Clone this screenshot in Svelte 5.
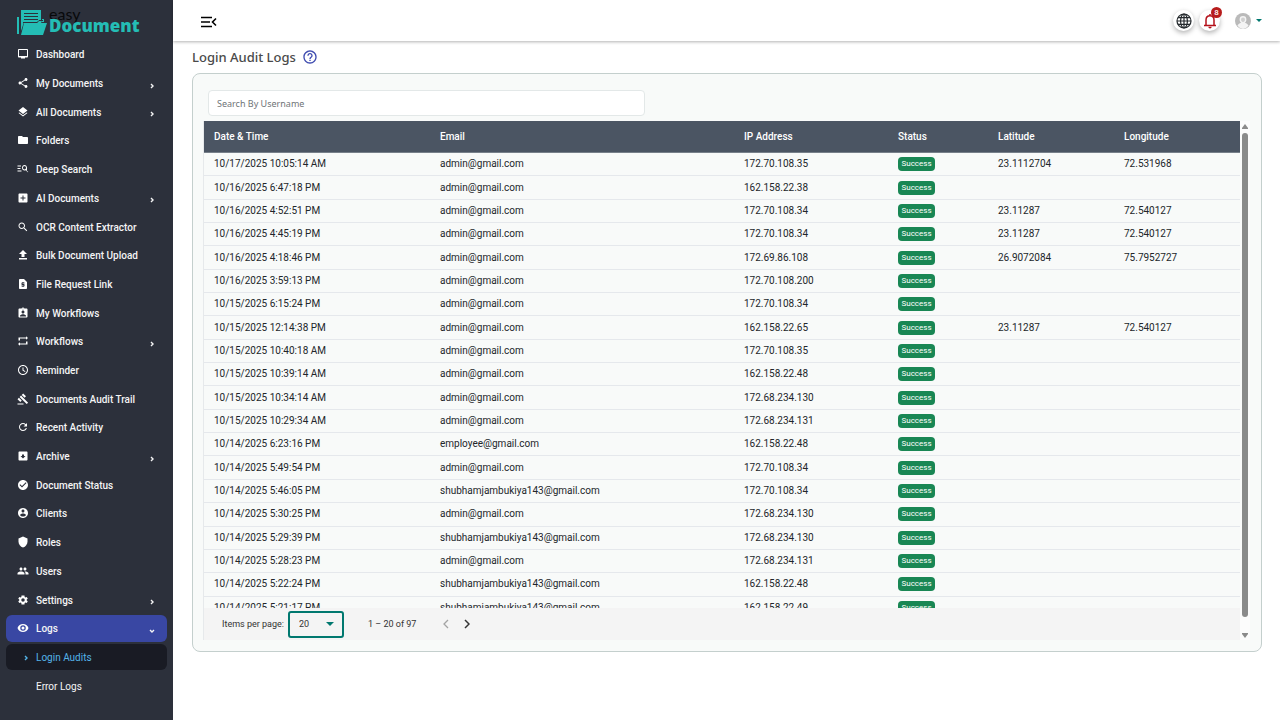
<script>
const menu = [
    { label: "Dashboard", icon: "monitor" },
    { label: "My Documents", icon: "share", group: true },
    { label: "All Documents", icon: "layers", group: true },
    { label: "Folders", icon: "folder" },
    { label: "Deep Search", icon: "deep" },
    { label: "AI Documents", icon: "plusBox", group: true },
    { label: "OCR Content Extractor", icon: "search" },
    { label: "Bulk Document Upload", icon: "upload" },
    { label: "File Request Link", icon: "request" },
    { label: "My Workflows", icon: "assignment" },
    { label: "Workflows", icon: "repeat", group: true },
    { label: "Reminder", icon: "clock" },
    { label: "Documents Audit Trail", icon: "gavel" },
    { label: "Recent Activity", icon: "refresh" },
    { label: "Archive", icon: "archive", group: true },
    { label: "Document Status", icon: "check" },
    { label: "Clients", icon: "account" },
    { label: "Roles", icon: "shield" },
    { label: "Users", icon: "people" },
    { label: "Settings", icon: "gear", group: true },
    { label: "Logs", icon: "eye", group: true, open: true },
];

const icons = {
    monitor: "M20 2H4c-1.100 0-2 .9-2 2v13c0 1.100.9 2 2 2h4v2h8v-2h4c1.100 0 2-.9 2-2V4c0-1.100-.9-2-2-2zm0 14H4V4h16v12z",
    share: "M18 16.080c-.76 0-1.440.3-1.960.77L8.910 12.700c.05-.23.09-.46.09-.7s-.04-.47-.09-.7l7.050-4.110c.54.5 1.250.81 2.040.81 1.660 0 3-1.340 3-3s-1.340-3-3-3-3 1.340-3 3c0 .24.04.47.09.7L8.040 9.810C7.500 9.310 6.790 9 6 9c-1.660 0-3 1.340-3 3s1.340 3 3 3c.79 0 1.500-.31 2.040-.81l7.120 4.160c-.05.21-.08.43-.08.65 0 1.610 1.310 2.920 2.920 2.920s2.920-1.310 2.920-2.920-1.310-2.920-2.920-2.920z",
    layers: "M12 18.500l-7.400-5.700L3 14.100l9 7 9-7-1.600-1.300zM12 16l9-7-9-7-9 7z",
    folder: "M10 4H4c-1.100 0-2 .9-2 2v12c0 1.100.9 2 2 2h16c1.100 0 2-.9 2-2V8c0-1.100-.9-2-2-2h-8l-2-2z",
    deep: "M1 5h7v2H1zM1 10h6v2H1zM1 15h8v2H1zM22.600 18.200l-3.200-3.200c.4-.8.6-1.600.6-2.500V9.500C20 6.500 17.800 4 15 4s-5 2.500-5 5.500S12.200 15 15 15c.9 0 1.700-.2 2.500-.6l4 4zM15 13c-1.700 0-3-1.500-3-3.500S13.300 6 15 6s3 1.500 3 3.500S16.700 13 15 13z",
    plusBox: "M19 3H5c-1.100 0-2 .9-2 2v14c0 1.100.9 2 2 2h14c1.100 0 2-.9 2-2V5c0-1.100-.9-2-2-2zm-2 10h-4v4h-2v-4H7v-2h4V7h2v4h4z",
    search: "M15.500 14h-.79l-.28-.27C15.410 12.590 16 11.110 16 9.500 16 5.910 13.090 3 9.500 3S3 5.910 3 9.500 5.910 16 9.500 16c1.610 0 3.090-.59 4.230-1.570l.27.28v.79l5 4.990L20.490 19l-4.990-5zm-6 0C7.010 14 5 11.990 5 9.500S7.010 5 9.500 5 14 7.010 14 9.500 11.990 14 9.500 14z",
    upload: "M9 16h6V10h5L12 2 4 10h5zM4 18h16v3H4z",
    request: "M14 2H6c-1.100 0-2 .9-2 2v16c0 1.100.9 2 2 2h12c1.100 0 2-.9 2-2V8zm1 9h-4v1h3c.6 0 1 .4 1 1v3c0 .6-.4 1-1 1h-1v1h-2v-1H9v-2h4v-1h-3c-.6 0-1-.4-1-1v-3c0-.6.4-1 1-1h1V8h2v1h2z",
    assignment: "M19 3h-4.180C14.400 1.840 13.300 1 12 1s-2.400.84-2.820 2H5c-1.100 0-2 .9-2 2v14c0 1.100.9 2 2 2h14c1.100 0 2-.9 2-2V5c0-1.100-.9-2-2-2zm-7 0c.55 0 1 .45 1 1s-.45 1-1 1-1-.45-1-1 .45-1 1-1zm0 4c1.660 0 3 1.340 3 3s-1.340 3-3 3-3-1.340-3-3 1.340-3 3-3zm6 12H6v-1.400c0-2 4-3.100 6-3.100s6 1.100 6 3.100V19z",
    repeat: "M6 7h12v2.500L22 6l-4-3.500V5H3v6h3zM18 17H6v-2.500L2 18l4 3.500V19h15v-6h-3z",
    clock: "M12 2C6.500 2 2 6.500 2 12s4.500 10 10 10 10-4.500 10-10S17.500 2 12 2zm0 18c-4.400 0-8-3.600-8-8s3.600-8 8-8 8 3.600 8 8-3.600 8-8 8zm1-13h-2v6l5 3 1-1.600-4-2.400z",
    gavel: "M1 21h12v2H1zM5.240 8.070l2.830-2.830 14.140 14.140-2.830 2.830zM12.320 1l5.660 5.660-2.830 2.830-5.660-5.660zM3.830 9.480l5.660 5.660-2.830 2.830L1 12.310z",
    refresh: "M17.650 6.350C16.200 4.900 14.210 4 12 4c-4.420 0-7.990 3.580-7.990 8s3.570 8 7.990 8c3.730 0 6.840-2.550 7.730-6h-2.080c-.82 2.330-3.040 4-5.650 4-3.310 0-6-2.690-6-6s2.690-6 6-6c1.660 0 3.140.69 4.220 1.780L13 11h7V4l-2.350 2.350z",
    archive: "M19 3H5c-1.100 0-2 .9-2 2v14c0 1.100.9 2 2 2h14c1.100 0 2-.9 2-2V5c0-1.100-.9-2-2-2zm-7 14l-5-5h3V9h4v3h3z",
    check: "M12 2C6.500 2 2 6.500 2 12s4.500 10 10 10 10-4.500 10-10S17.500 2 12 2zm-2 15l-5-5 1.400-1.400L10 14.200l7.600-7.600L19 8z",
    account: "M12 2C6.500 2 2 6.500 2 12s4.500 10 10 10 10-4.500 10-10S17.500 2 12 2zm0 3c1.700 0 3 1.300 3 3s-1.300 3-3 3-3-1.300-3-3 1.300-3 3-3zm0 14.200c-2.500 0-4.700-1.300-6-3.200 0-2 4-3.100 6-3.100s6 1.100 6 3.100c-1.300 1.900-3.500 3.200-6 3.200z",
    shield: "M12 1L3 5v6c0 5.550 3.840 10.740 9 12 5.160-1.260 9-6.450 9-12V5z",
    people: "M16 11c1.660 0 2.990-1.340 2.990-3S17.660 5 16 5s-3 1.340-3 3 1.340 3 3 3zm-8 0c1.660 0 2.990-1.340 2.990-3S9.660 5 8 5 5 6.340 5 8s1.340 3 3 3zm0 2c-2.330 0-7 1.170-7 3.500V19h14v-2.500C15 14.170 10.330 13 8 13zm8 0c-.29 0-.62.02-.97.05 1.160.84 1.970 1.970 1.970 3.450V19h6v-2.500c0-2.330-4.670-3.500-7-3.500z",
    gear: "M19.400 13c.1-.7.1-1.300 0-2l2.100-1.600-2-3.500-2.500 1c-.5-.4-1.100-.7-1.700-1L15 3h-6l-.3 2.900c-.6.3-1.200.6-1.700 1l-2.500-1-2 3.500L4.600 11c-.1.700-.1 1.300 0 2l-2.100 1.600 2 3.500 2.500-1c.5.4 1.100.7 1.700 1L9 21h6l.3-2.900c.6-.3 1.200-.6 1.700-1l2.500 1 2-3.500zM12 15.500a3.500 3.500 0 1 1 0-7 3.500 3.500 0 0 1 0 7z",
    eye: "M12 4C7 4 2.700 7.100 1 12c1.700 4.900 6 8 11 8s9.300-3.100 11-8c-1.700-4.900-6-8-11-8zm0 13.500A5.500 5.500 0 1 1 12 6.500a5.500 5.500 0 0 1 0 11zM12 9a3 3 0 1 0 0 6 3 3 0 0 0 0-6z",
};

const admin = "admin@gmail.com";
const shubham = "shubhamjambukiya143@gmail.com";

const logs = [
    ["10/17/2025 10:05:14 AM", admin, "172.70.108.35", "23.1112704", "72.531968"],
    ["10/16/2025 6:47:18 PM", admin, "162.158.22.38", "", ""],
    ["10/16/2025 4:52:51 PM", admin, "172.70.108.34", "23.11287", "72.540127"],
    ["10/16/2025 4:45:19 PM", admin, "172.70.108.34", "23.11287", "72.540127"],
    ["10/16/2025 4:18:46 PM", admin, "172.69.86.108", "26.9072084", "75.7952727"],
    ["10/16/2025 3:59:13 PM", admin, "172.70.108.200", "", ""],
    ["10/15/2025 6:15:24 PM", admin, "172.70.108.34", "", ""],
    ["10/15/2025 12:14:38 PM", admin, "162.158.22.65", "23.11287", "72.540127"],
    ["10/15/2025 10:40:18 AM", admin, "172.70.108.35", "", ""],
    ["10/15/2025 10:39:14 AM", admin, "162.158.22.48", "", ""],
    ["10/15/2025 10:34:14 AM", admin, "172.68.234.130", "", ""],
    ["10/15/2025 10:29:34 AM", admin, "172.68.234.131", "", ""],
    ["10/14/2025 6:23:16 PM", "employee@gmail.com", "162.158.22.48", "", ""],
    ["10/14/2025 5:49:54 PM", admin, "172.70.108.34", "", ""],
    ["10/14/2025 5:46:05 PM", shubham, "172.70.108.34", "", ""],
    ["10/14/2025 5:30:25 PM", admin, "172.68.234.130", "", ""],
    ["10/14/2025 5:29:39 PM", shubham, "172.68.234.130", "", ""],
    ["10/14/2025 5:28:23 PM", admin, "172.68.234.131", "", ""],
    ["10/14/2025 5:22:24 PM", shubham, "162.158.22.48", "", ""],
    ["10/14/2025 5:21:17 PM", shubham, "162.158.22.49", "", ""],
];

let query = $state("");
let pageSize = $state("20");
let shown = $derived(logs.filter((row) => row[1].includes(query)));
</script>

<div class="layout">
    <aside class="sidebar">
        <a class="logo" href="#home">
            <svg viewBox="0 0 30 26" width="30" height="26" aria-hidden="true">
                <path fill="#24bdb5" d="M0 8h2v17H0zM4 1h20v12H7l-3 9z" />
                <path fill="#24bdb5" d="M25 10h2v3h-2zM7 14h13l2-2h3l-1 2h6l-4 12H4z" />
                <path stroke="#2c303b" fill="none" d="M7 4.500h14M7 7.500h14M7 10.500h14M6 13.500h14l2-2h4" />
            </svg>
            <span class="brand"><span class="easy">easy</span><span class="doc">Document</span></span>
        </a>
        <nav>
            {#each menu as item}
                <a class="item" class:active={item.open} href="#menu">
                    <svg viewBox="0 0 24 24" width="12" height="12" aria-hidden="true"><path fill="#fff" fill-rule="evenodd" d={icons[item.icon]} /></svg>
                    <span>{item.label}</span>
                    {#if item.group}
                        <svg class="arrow" class:down={item.open} viewBox="0 0 6 6" width="6" height="6" aria-hidden="true"><path d="M2 1l2 2-2 2" /></svg>
                    {/if}
                </a>
            {/each}
            <a class="item sub current" href="#login">
                <svg class="arrow" viewBox="0 0 6 6" width="6" height="6" aria-hidden="true"><path d="M2 1l2 2-2 2" /></svg>
                <span>Login Audits</span>
            </a>
            <a class="item sub" href="#errors"><span>Error Logs</span></a>
        </nav>
    </aside>

    <div class="page">
        <header>
            <button class="plain" aria-label="Toggle menu">
                <svg viewBox="0 0 16 12" width="16" height="12"><path fill="none" stroke="#000" stroke-width="1.600" d="M0 1.500h11M0 6h9M0 10.500h11M15 2.500L11.500 6 15 9.500" /></svg>
            </button>
            <div class="tools">
                <button class="round" aria-label="Language">
                    <svg viewBox="0 0 16 16" width="16" height="16"><g fill="none" stroke="#24292d" stroke-width="1.200"><circle cx="8" cy="8" r="7" /><ellipse cx="8" cy="8" rx="3.400" ry="7" /><path d="M8 1v14M1 8h14M2 4.700h12M2 11.300h12" /></g></svg>
                </button>
                <button class="round" aria-label="Notifications">
                    <svg viewBox="0 0 14 16" width="14" height="16"><path fill="none" stroke="#b5121b" stroke-width="1.500" d="M1 12.500h12M3 12V7c0-2.500 1.500-4.300 4-4.300S11 4.500 11 7v5M7 1v2" /><path fill="#b5121b" d="M5.300 13.800h3.400a1.700 1.700 0 0 1-3.400 0z" /></svg>
                    <span class="badge">8</span>
                </button>
                <button class="plain user" aria-label="Account">
                    <svg viewBox="0 0 16 16" width="16" height="16"><circle cx="8" cy="8" r="8" fill="#bababa" /><path fill="#f4f4f4" d="M8 3a3.400 3.400 0 0 1 3.400 3.400c0 1.500-.7 2.700-1.600 3.300 2 .5 3.200 1.600 3.700 3.100A8 8 0 0 1 8 16a8 8 0 0 1-5.500-3.200c.5-1.500 1.700-2.600 3.700-3.100-.9-.6-1.600-1.800-1.600-3.300A3.400 3.400 0 0 1 8 3z" /><path fill="#d0d0d0" d="M8 4.600a2 2 0 0 1 2 2c0 1.300-.9 2.400-2 2.400s-2-1.100-2-2.400a2 2 0 0 1 2-2z" /></svg>
                    <svg viewBox="0 0 6 4" width="6" height="4"><path fill="#00786f" d="M0 0h6L3 3z" /></svg>
                </button>
            </div>
        </header>

        <main>
            <div class="title">
                <h1>Login Audit Logs</h1>
                <button class="plain" aria-label="Help">
                    <svg viewBox="0 0 24 24" width="16" height="16"><path fill="#3f4cb0" d="M11 18h2v-2h-2v2zm1-16C6.480 2 2 6.480 2 12s4.480 10 10 10 10-4.480 10-10S17.520 2 12 2zm0 18c-4.410 0-8-3.590-8-8s3.590-8 8-8 8 3.590 8 8-3.590 8-8 8zm0-14c-2.210 0-4 1.790-4 4h2c0-1.100.9-2 2-2s2 .9 2 2c0 2-3 1.750-3 5h2c0-2.250 3-2.500 3-5 0-2.210-1.790-4-4-4z" /></svg>
                </button>
            </div>

            <section class="card">
                <input class="search" type="text" placeholder="Search By Username" aria-label="Search By Username" bind:value={query} />
                <div class="panel">
                    <div class="content">
                        <div class="rows">
                            <table>
                                <colgroup>
                                    <col class="c-date" /><col class="c-mail" /><col class="c-ip" /><col class="c-status" /><col class="c-lat" /><col />
                                </colgroup>
                                <thead>
                                    <tr><th>Date &amp; Time</th><th>Email</th><th>IP Address</th><th>Status</th><th>Latitude</th><th>Longitude</th></tr>
                                </thead>
                                <tbody>
                                    {#each shown as [date, email, ip, lat, lng]}
                                        <tr>
                                            <td>{date}</td>
                                            <td>{email}</td>
                                            <td>{ip}</td>
                                            <td><span class="success">Success</span></td>
                                            <td>{lat}</td>
                                            <td>{lng}</td>
                                        </tr>
                                    {/each}
                                </tbody>
                            </table>
                        </div>
                        <div class="paginator">
                            <label for="size">Items per page:</label>
                            <div class="select">
                                <select id="size" bind:value={pageSize}>
                                    <option>10</option>
                                    <option>20</option>
                                    <option>50</option>
                                </select>
                                <svg viewBox="0 0 8 4" width="8" height="4" aria-hidden="true"><path fill="#00786f" d="M0 0h8L4 4z" /></svg>
                            </div>
                            <span class="range">1 – 20 of 97</span>
                            <button class="plain pager" aria-label="Previous page" disabled>
                                <svg viewBox="0 0 6 10" width="6" height="10"><path d="M5 1L1 5l4 4" fill="none" stroke="#a3a3a3" stroke-width="1.300" /></svg>
                            </button>
                            <button class="plain pager" aria-label="Next page">
                                <svg viewBox="0 0 6 10" width="6" height="10"><path d="M1 1l4 4-4 4" fill="none" stroke="#333" stroke-width="1.500" /></svg>
                            </button>
                        </div>
                    </div>
                    <div class="scrollbar" aria-hidden="true">
                        <svg viewBox="0 0 6 5" width="6" height="5"><path fill="#8b8b8b" d="M3 0l3 4v1H0V4z" /></svg>
                        <div class="thumb"></div>
                        <svg viewBox="0 0 6 5" width="6" height="5"><path fill="#8b8b8b" d="M0 0h6v1L3 5 0 1z" /></svg>
                    </div>
                </div>
            </section>
        </main>
    </div>
</div>

<style>
:global(body) { background: #fff; font-family: Roboto, sans-serif; }
* { box-sizing: border-box; }
svg { display: block; flex: none; }
button, input, select { font-family: inherit; margin: 0; }
.plain { border: 0; padding: 0; background: none; cursor: pointer; }

.layout { display: flex; min-height: 100vh; }
.sidebar { width: 173px; flex: none; background: #2c303b; color: #fff; padding: 0 6px; }
.logo { display: flex; height: 41px; padding: 9px 0 0 11px; gap: 2px; text-decoration: none; }
.brand { display: flex; flex-direction: column; }
.easy { color: #08090b; font: 16px/9px Lato, sans-serif; }
.doc { color: #24bdb5; font: 800 17px/15px "Open Sans", sans-serif; }
nav { display: grid; grid-auto-rows: 1fr; gap: 2px; height: 658px; }
.item { display: flex; align-items: center; gap: 7px; padding: 0 12px 0 11px; border-radius: 6px; color: #f4f4f5; font-size: 10px; font-weight: 500; text-decoration: none; white-space: nowrap; }
.item span { padding-top: 1px; }
.item .arrow { margin: 5px 0 0 auto; }
.arrow path { fill: none; stroke: currentColor; stroke-width: 1.4; }
.arrow.down { transform: rotate(90deg); }
.active { background: #3947a3; }
.sub { font-weight: 400; padding-left: 30px; }
.current { background: #191b24; color: #54b4e8; padding-left: 17px; }
.item.current .arrow { margin: 2px 0 0; }

.page { flex: 1; min-width: 0; display: flex; flex-direction: column; }
header { display: flex; justify-content: space-between; align-items: center; height: 41px; padding: 0 18px 0 28px; box-shadow: 0 1px 3px rgba(0, 0, 0, 0.3); }
header > .plain { padding-top: 3px; }
.tools { display: flex; align-items: center; gap: 5px; }
.round { position: relative; display: flex; align-items: center; justify-content: center; width: 21px; height: 21px; padding: 0; border: 0; border-radius: 50%; background: #fff; box-shadow: 0 2px 5px rgba(0, 0, 0, 0.3); }
.badge { position: absolute; top: -3px; right: -2px; width: 11px; height: 11px; border-radius: 50%; background: #b71c1c; color: #fff; font-size: 8px; font-weight: 500; line-height: 11px; text-align: center; }
.user { display: flex; align-items: center; gap: 5px; margin-left: 10px; }

main { padding: 6px 18px 20px 19px; }
.title { display: flex; align-items: center; gap: 6px; height: 20px; margin-bottom: 6px; }
h1 { margin: 0; color: #4a4a4a; font: 500 13px/18px "Noto Sans", sans-serif; }
.card { padding: 16px 11px 11px; border: 1px solid #c4cfcd; border-radius: 8px; background: #f8faf9; }
.search { display: block; width: 437px; max-width: 100%; height: 26px; margin: 0 4px 5px; padding: 0 8px; border: 1px solid #e3e8e8; border-radius: 4px; background: #fff; color: #333; font: 9px "Noto Sans", sans-serif; }
.search::placeholder { color: #6f7477; opacity: 1; }
.panel { display: flex; }
.content { flex: 1; min-width: 0; box-shadow: -1px 0 #e6e9eb; }
.rows { height: 487px; overflow: hidden; }
table { width: 100%; height: 499px; table-layout: fixed; border-collapse: separate; border-spacing: 0; color: #22262a; font-size: 10px; }
th, td { padding: 0 10px; text-align: left; white-space: nowrap; }
th { height: 32px; background: #4b5563; color: #fff; font-weight: 500; border-bottom: 1px solid #77808a; }
td { line-height: 22px; border-bottom: 1px solid #e5e8ec; }
.c-date { width: 226px; }
.c-mail { width: 304px; }
.c-ip { width: 154px; }
.c-status { width: 100px; }
.c-lat { width: 126px; }
.success { display: block; width: 37px; height: 14px; border-radius: 4px; background: #198754; color: #fff; font-size: 8px; line-height: 14px; text-align: center; }

.paginator { display: flex; align-items: center; height: 32px; padding-left: 18px; background: #f4f4f4; color: #333; font-size: 9px; }
.select { display: grid; align-items: center; margin: 0 24px 0 4px; }
.select > * { grid-area: 1 / 1; }
.select svg { justify-self: end; margin-right: 10px; pointer-events: none; }
select { appearance: none; width: 56px; height: 27px; padding: 0 9px; border: 2px solid #00786f; border-radius: 3px; background: none; color: #333; font-size: 9px; }
.range { margin-right: 27px; }
.pager { margin-right: 15px; }
.scrollbar { display: flex; flex-direction: column; align-items: center; gap: 4px; width: 10px; padding: 3px 0 2px; background: #fcfcfc; }
.thumb { width: 6px; height: 484px; margin-bottom: auto; border-radius: 3px; background: #8b8b8b; }
</style>
